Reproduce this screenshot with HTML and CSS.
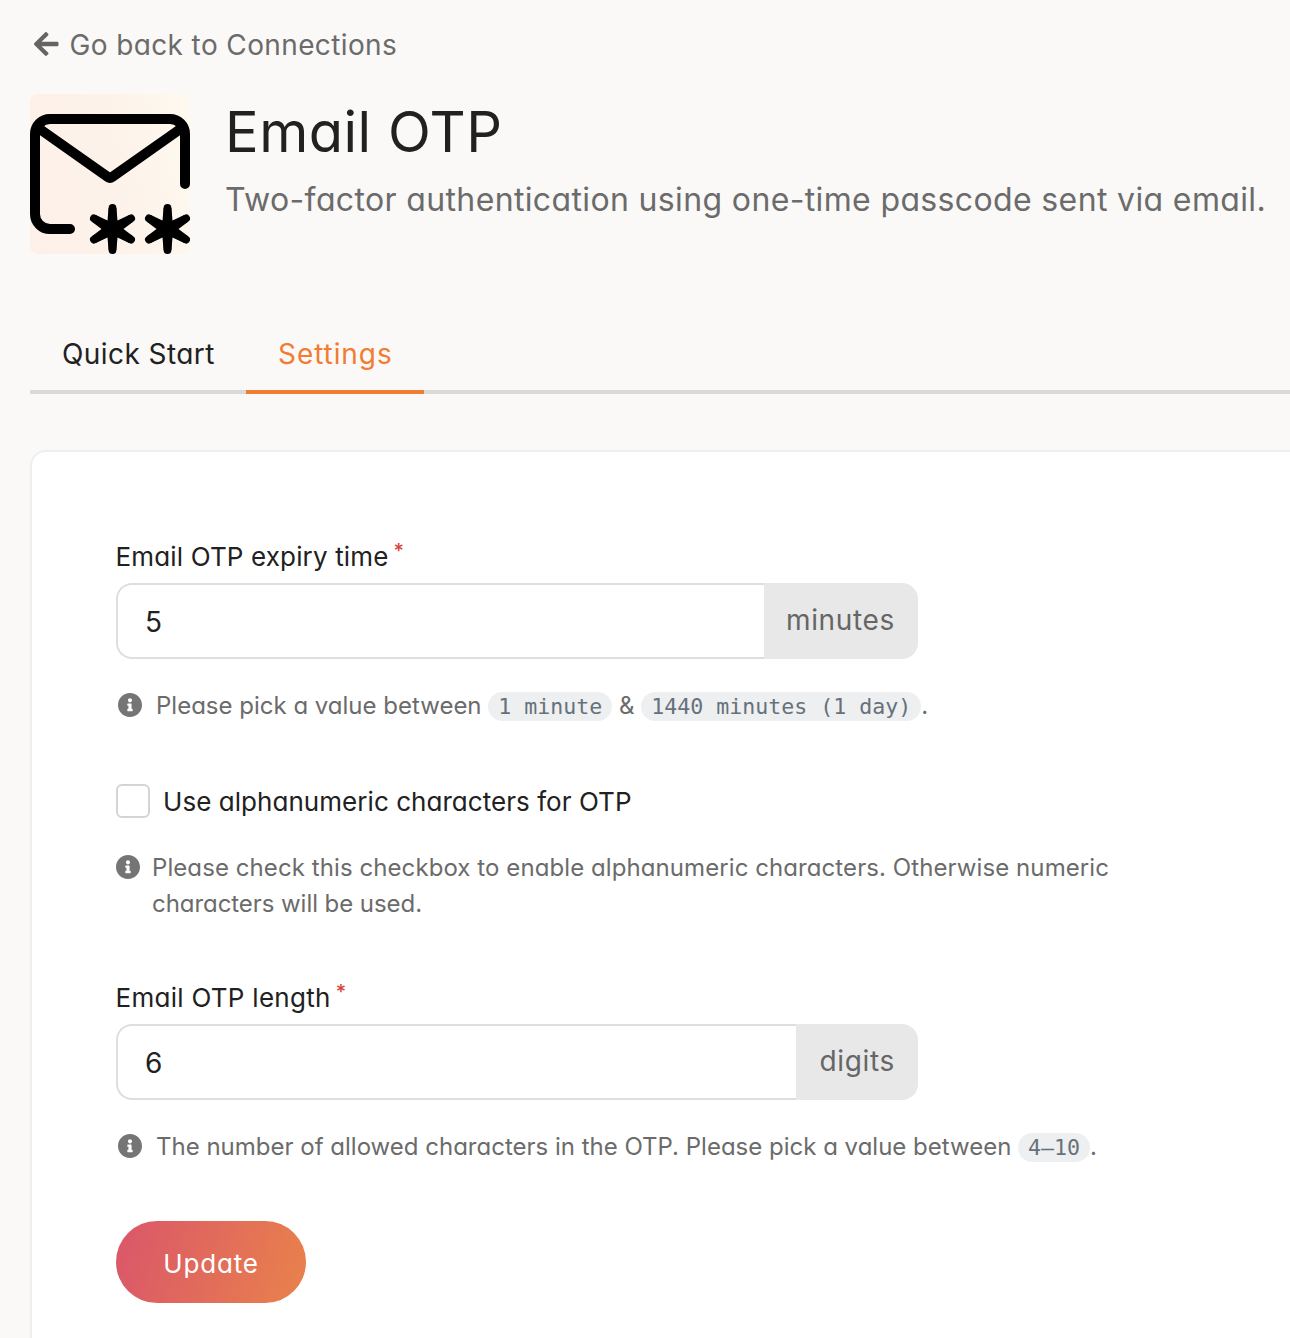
FILE: index.html
```
<!DOCTYPE html>
<html lang="en">
<head>
<meta charset="utf-8">
<title>Email OTP</title>
<link rel="stylesheet" href="styles.css">
</head>
<body>
<svg class="defs" aria-hidden="true">
  <symbol id="info" viewBox="8 8 496 496"><path d="M256 8C119.043 8 8 119.083 8 256c0 136.997 111.043 248 248 248s248-111.003 248-248C504 119.083 392.957 8 256 8zm0 110c23.196 0 42 18.804 42 42s-18.804 42-42 42-42-18.804-42-42 18.804-42 42-42zm56 254c0 6.627-5.373 12-12 12h-88c-6.627 0-12-5.373-12-12v-24c0-6.627 5.373-12 12-12h12v-64h-12c-6.627 0-12-5.373-12-12v-24c0-6.627 5.373-12 12-12h64c6.627 0 12 5.373 12 12v100h12c6.627 0 12 5.373 12 12v24z"/></symbol>
</svg>
<main class="page">
  <a class="back">
    <svg class="back-icon" viewBox="0 0 448 512"><path d="M257.5 445.1l-22.2 22.2c-9.4 9.4-24.6 9.4-33.9 0L7 273c-9.4-9.4-9.4-24.6 0-33.9L201.4 44.7c9.4-9.4 24.6-9.4 33.9 0l22.2 22.2c9.5 9.5 9.3 25-.4 34.3L136.6 216H424c13.3 0 24 10.7 24 24v32c0 13.3-10.7 24-24 24H136.6l120.5 114.8c9.8 9.3 10 24.8.4 34.3z"/></svg>
    <span>Go back to Connections</span>
  </a>

  <header class="header">
    <div class="logo">
      <svg viewBox="0 0 160 160" width="160" height="160">
        <defs>
          <g id="star">
            <path d="M0-21V21M-18.6-10.6L18.6 10.6M18.6-10.6L-18.6 10.6" fill="none" stroke="#000" stroke-width="7.8" stroke-linecap="round"/>
            <path d="M-3.9-21H3.9L5-8.6 16.7-14 20.6-7.2 11 0 20.6 7.2 16.7 14 5 8.6 3.9 21H-3.9L-5 8.6-16.7 14-20.6 7.2-11 0-20.6-7.2-16.7-14-5-8.6Z"/>
          </g>
        </defs>
        <path d="M155 90V40A15 15 0 0 0 140 25H20A15 15 0 0 0 5 40V120A15 15 0 0 0 20 135H40" fill="none" stroke="#000" stroke-width="10" stroke-linecap="round"/>
        <path d="M9 34.5L78 83.2Q80 84.6 82 83.2L151 34.5" fill="none" stroke="#000" stroke-width="10" stroke-linecap="round" stroke-linejoin="round"/>
        <use href="#star" x="82.5" y="135"/>
        <use href="#star" x="137.5" y="135"/>
      </svg>
    </div>
    <div class="heading">
      <h1 class="title">Email OTP</h1>
      <p class="subtitle">Two-factor authentication using one-time passcode sent via email.</p>
    </div>
  </header>

  <nav class="tabs">
    <a class="tab tab-start">Quick Start</a>
    <a class="tab tab-settings active">Settings</a>
  </nav>

  <form class="card">
    <label class="label" for="expiry"><span class="t-expiry">Email OTP expiry time</span><span class="required">*</span></label>
    <div class="field">
      <input class="input" id="expiry" type="text" value="5">
      <span class="addon addon-minutes">minutes</span>
    </div>
    <div class="hint">
      <svg class="info"><use href="#info"/></svg>
      <p class="hint-text">Please pick a value between <code>1 minute</code> &amp; <code>1440 minutes (1 day)</code>.</p>
    </div>

    <label class="check"><span class="box"></span><span class="check-text">Use alphanumeric characters for OTP</span></label>
    <div class="hint hint-check">
      <svg class="info"><use href="#info"/></svg>
      <p class="hint-text"><span class="t-check">Please check this checkbox to enable alphanumeric characters. Otherwise numeric</span><br><span class="t-used">characters will be used.</span></p>
    </div>

    <label class="label" for="length"><span class="t-length">Email OTP length</span><span class="required">*</span></label>
    <div class="field">
      <input class="input" id="length" type="text" value="6">
      <span class="addon addon-digits">digits</span>
    </div>
    <div class="hint">
      <svg class="info"><use href="#info"/></svg>
      <p class="hint-text">The number of allowed characters in the OTP. Please pick a value between <code>4–10</code>.</p>
    </div>

    <button class="update" type="button">Update</button>
  </form>
</main>
</body>
</html>
```
FILE: styles.css
```
* { box-sizing: border-box; }
html, body { margin: 0; }
body {
  background: #faf9f8;
  color: #212121;
  font-family: Inter, sans-serif;
  font-weight: 400;
  font-feature-settings: "cv11";
  height: 1338px;
  overflow: hidden;
}
h1, p { margin: 0; font-weight: inherit; }
.defs { display: none; }
.page { padding: 24px 0 0 30px; }

.back {
  display: flex;
  align-items: center;
  gap: 11px;
  height: 40px;
  padding: 1px 0 0 4px;
  font-size: 28px;
  letter-spacing: .38px;
  color: #6b6b6b;
}
.back-icon { width: 24.5px; height: 28px; fill: #646464; margin-top: -2px; }

.header { display: flex; gap: 36px; margin-top: 30px; height: 160px; }
.logo {
  width: 160px;
  height: 160px;
  flex: none;
  border-radius: 8px;
  background: linear-gradient(80deg, #fdf0e8, #fdf3ea 60%, #fef9ee);
  overflow: hidden;
}
.heading { white-space: nowrap; }
.title { font-size: 56px; line-height: 76px; letter-spacing: .5px; margin-left: -1px; }
.subtitle { font-size: 32px; line-height: 40px; margin: 10px 0 0 -1px; letter-spacing: .36px; color: #6b6b6b; }

.tabs { display: flex; margin-top: 63px; height: 76px; border-bottom: 4px solid #d9d9d9; margin-top: 64px; }
.tab {
  height: 76px;
  padding: 16px 0 0 32px;
  line-height: 40px;
  font-size: 28px;
  white-space: nowrap;
}
.tab-start { width: 216px; letter-spacing: .42px; }
.tab-settings { width: 178px; letter-spacing: .93px; }
.tab.active { color: #f27c31; border-bottom: 4px solid #f27c31; }

.card {
  margin-top: 56px;
  height: 900px;
  padding: 85px 0 0 84px;
  background: #fff;
  border: 2px solid #eceef0;
  border-right: 0;
  border-radius: 16px 0 0 0;
}
.label { display: flex; height: 40px; line-height: 40px; font-size: 26px; margin-left: -.5px; white-space: nowrap; }
.t-expiry { letter-spacing: .15px; }
.t-length { letter-spacing: .28px; }
.required { color: #d8443c; font-size: 20px; font-weight: 500; line-height: 29px; margin-left: 5px; }

.field { display: flex; width: 802px; height: 76px; margin-top: 6px; }
.input {
  flex: 1;
  min-width: 0;
  border: 2px solid #dedede;
  border-right: 0;
  border-radius: 16px 0 0 16px;
  padding: 2px 0 0 27px;
  font: inherit;
  font-size: 28px;
  color: #212121;
  background: #fff;
  outline: none;
}
.addon {
  background: #e8e8e8;
  border-radius: 0 16px 16px 0;
  font-size: 28px;
  line-height: 75px;
  color: #666;
}
.addon-minutes { width: 154px; padding-left: 22px; letter-spacing: .65px; }
.addon-digits { width: 122px; padding-left: 23.5px; letter-spacing: .66px; }

.hint { display: flex; margin-top: 28px; padding-left: 2px; line-height: 37px; font-size: 24px; color: #6b6b6b; white-space: nowrap; }
.info { width: 24px; height: 24px; flex: none; fill: #757575; margin: 6px 14px 0 0; }
.t-check { letter-spacing: .08px; }
.t-used { letter-spacing: -.06px; }
code {
  display: inline-block;
  height: 29px;
  line-height: 30px;
  padding: 0 10px;
  border-radius: 15px;
  background: #eeeff1;
  color: #66717a;
  font-family: "DejaVu Sans Mono", monospace;
  font-size: 21.6px;
}

.check { display: flex; margin-top: 60px; height: 34px; }
.box { width: 34px; height: 34px; border: 2px solid #d4d4d4; border-radius: 6px; background: #fff; }
.check-text { margin: 1px 0 0 13px; line-height: 34px; font-size: 26px; letter-spacing: .05px; }
.hint-check { margin-top: 32px; padding-left: 0; line-height: 36px; }
.hint-check .info { margin: 5px 12px 0 0; }
.hint-check + .label { margin-top: 56px; }

.update {
  display: block;
  width: 190px;
  height: 82px;
  margin-top: 56px;
  padding: 2px 0 0;
  border: 0;
  border-radius: 41px;
  background: linear-gradient(105deg, #da566a, #e9824b);
  color: #fff;
  font: inherit;
  font-size: 26px;
  letter-spacing: .8px;
}
```
